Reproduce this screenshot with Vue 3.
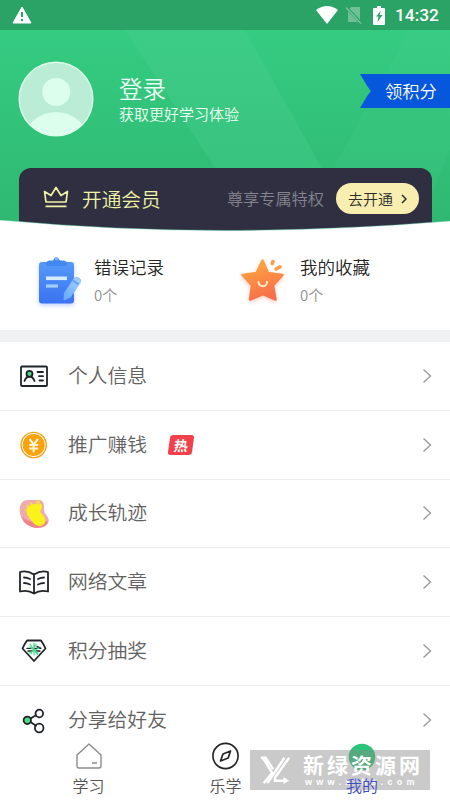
<script setup>
const rows = [
  { id: 'card', label: '个人信息' },
  { id: 'coin', label: '推广赚钱', badge: '热' },
  { id: 'foot', label: '成长轨迹' },
  { id: 'book', label: '网络文章' },
  { id: 'gem', label: '积分抽奖' },
  { id: 'share', label: '分享给好友' },
]
</script>

<template>
  <div class="screen">
    <header class="hero">
      <svg class="hero-bg" viewBox="0 0 450 231" preserveAspectRatio="none">
        <defs>
          <linearGradient id="base" x1="0" y1="0" x2="0" y2="1">
            <stop offset="0.1" stop-color="#35cc82" />
            <stop offset="1" stop-color="#2fb771" />
          </linearGradient>
          <linearGradient id="band" x1="0" y1="0" x2="0" y2="1">
            <stop offset="0" stop-color="#40ce89" />
            <stop offset="1" stop-color="#38c27c" />
          </linearGradient>
        </defs>
        <rect width="450" height="231" fill="url(#base)" />
        <path d="M106 0H228L320 165L356 231H256Z" fill="url(#band)" opacity=".8" />
        <path d="M335 165L427 0H450V150L415 231H320Z" fill="url(#band)" opacity=".4" />
      </svg>

      <div class="status">
        <svg class="warn" viewBox="0 0 20 18"><path d="M10 1L19 17H1Z" fill="#fff" stroke="#fff" stroke-linejoin="round" /><path d="M10 6v5M10 13v2" stroke="#2ca366" stroke-width="2" /></svg>
        <svg class="wifi" viewBox="0 0 22 18"><path d="M0 4Q11-4 22 4L11 18Z" fill="#fff" /></svg>
        <svg class="sim" viewBox="0 0 17 18"><path d="M6 1H15V16H3V5Z" fill="#fff" opacity=".32" /><path d="M1 1L16 17" stroke="#2ca366" stroke-width="3" /><path d="M1 1.500L16 17.500" stroke="#78c59d" stroke-width="1.300" /></svg>
        <svg class="battery" viewBox="0 0 12 19"><path d="M1 2H4V0H8V2H11Q12 2 12 3V18Q12 19 11 19H1Q0 19 0 18V3Q0 2 1 2Z" fill="#fff" /><path d="M8 4.500L3 10.500H5.500L4.500 16L9.500 9H6.500Z" fill="#2ca366" /></svg>
        <span class="clock">14:32</span>
      </div>

      <div class="profile">
        <svg class="avatar" viewBox="0 0 76 76">
          <defs><clipPath id="face"><circle cx="38" cy="38" r="36.500" /></clipPath></defs>
          <circle cx="38" cy="38" r="36.800" fill="#bbecd5" stroke="#d8fbe9" stroke-width="1.500" />
          <g clip-path="url(#face)" fill="#dcfeec"><circle cx="38.300" cy="31" r="14" /><circle cx="38" cy="84.500" r="33.500" /></g>
        </svg>
        <div class="who">
          <div class="login">登录</div>
          <div class="tip">获取更好学习体验</div>
        </div>
        <div class="ribbon">领积分</div>
      </div>

      <div class="vip">
        <svg class="crown" viewBox="0 0 26 22"><path d="M3 16L1.500 5.500L8 9.500L13 1.500L18 9.500L24.500 5.500L23 16ZM2.500 20.300H23.500" fill="none" stroke="#eff4a6" stroke-width="1.700" stroke-linejoin="round" /></svg>
        <span class="vip-title">开通会员</span>
        <span class="vip-sub">尊享专属特权</span>
        <span class="vip-btn">去开通<svg viewBox="0 0 6 10"><path d="M1 1L5 5L1 9" fill="none" stroke="#2d2c2d" stroke-width="1.500" /></svg></span>
      </div>
      <svg class="curve" viewBox="0 0 450 13" preserveAspectRatio="none"><path d="M0 0Q115 10.500 225 10.500T450 1V13H0Z" fill="#fff" /><path d="M0 0Q115 10.500 225 10.500T450 1" fill="none" stroke="#4acb9a" stroke-width=".8" opacity=".5" /></svg>
    </header>

    <section class="stats">
      <div class="stat">
        <svg class="stat-icon" viewBox="0 0 60 60">
          <defs>
            <linearGradient id="blue" x1="0" y1="0" x2="0" y2="1"><stop stop-color="#559af8" /><stop offset="1" stop-color="#3b72f2" /></linearGradient>
            <linearGradient id="pen" x1="1" y1="0" x2="0" y2="1"><stop stop-color="#a9d2fd" /><stop offset="1" stop-color="#64a9fa" /></linearGradient>
          </defs>
          <rect class="blue-shadow" x="9" y="12" width="35" height="41.500" rx="3" fill="url(#blue)" />
          <path d="M16 14Q16 10.500 20 10.500H23Q26 4 30 10.500H33Q37 10.500 37 14Q37 16 34 16H19Q16 16 16 14Z" fill="#4387f0" />
          <circle cx="26.500" cy="8.800" r="1.800" fill="#80b4fb" />
          <path d="M16 28.300H37" stroke="#d7eaff" stroke-width="3.600" /><path d="M16 36H28" stroke="#a5cdfc" stroke-width="3.200" />
          <path d="M34 50L34.500 43L43.500 29Q46 26 49 28Q52 30 50 33L40.500 47Z" fill="url(#pen)" stroke="#7db6fb" stroke-width=".8" stroke-linejoin="round" />
          <path d="M43 30.500L48.500 34.300" stroke="#4b8df2" stroke-width="1.200" />
        </svg>
        <div><div class="stat-name">错误记录</div><div class="stat-count">0个</div></div>
      </div>
      <div class="stat">
        <svg class="stat-icon" viewBox="0 0 60 60">
          <defs><linearGradient id="orange" x1="0" y1="0" x2=".35" y2="1"><stop stop-color="#ffad3f" /><stop offset="1" stop-color="#f8704a" /></linearGradient></defs>
          <path class="star-shadow" d="M26.500 10.500L32 23L46.500 25L37 35.500L39.500 49.500L27 44L14 49.500L16 35.500L6.500 25L20.500 23Z" fill="url(#orange)" stroke="url(#orange)" stroke-width="2.500" stroke-linejoin="round" />
          <path d="M22.500 32C23 37.500 30.500 37.500 31 32" fill="none" stroke="#ffecc9" stroke-width="2" stroke-linecap="round" />
          <path d="M36.200 13.500L37 11.500M40 19L44 16.800" stroke="#f6a04a" stroke-width="3.600" stroke-linecap="round" />
        </svg>
        <div><div class="stat-name">我的收藏</div><div class="stat-count">0个</div></div>
      </div>
    </section>

    <ul class="menu">
      <li v-for="row in rows" :key="row.id" class="row">
        <svg class="row-icon" viewBox="0 0 32 32" fill="none" stroke="#202429" stroke-width="1.800" stroke-linecap="round" stroke-linejoin="round">
          <template v-if="row.id === 'card'">
            <rect x="3" y="6.500" width="26" height="19.500" rx="1" />
            <path d="M6.500 21Q8 16.500 11.500 16.500T16.500 21M19.500 12H25M21 16.200H25M21.500 20.500H25" />
            <circle cx="11.500" cy="13.800" r="3" fill="#4bd885" />
          </template>
          <template v-else-if="row.id === 'coin'">
            <circle cx="15.700" cy="16" r="12.600" stroke="#f3a21e" stroke-width="1.400" />
            <circle cx="15.700" cy="16" r="11" fill="#faa10b" stroke="none" />
            <path d="M11.500 10L15.700 15.500L20 10M11.200 16H20.200M11.200 19.500H20.200M15.700 15.500V23.500" stroke="#fff8d6" stroke-width="2.100" stroke-linecap="butt" />
          </template>
          <template v-else-if="row.id === 'foot'">
            <path d="M3 7Q5 2.500 12 3H22Q26 4 26 10Q25 15 29 19Q33 25 28 28Q20 33 12 29Q3 25 2 16Q1 11 3 7Z" fill="#efaaae" stroke="none" />
            <path d="M4 20Q14 28 30 24Q29 31 20 31Q12 31 6 25Z" fill="#ee858e" stroke="none" />
            <path d="M9 11Q12 7 17 7Q22 5 24 8Q24 12 22 15Q26 18 27 22Q28 29 21 29Q16 28 13 23Q7 16 9 11Z" fill="#fbf21c" stroke="none" />
            <g fill="#f5d35c" stroke="none"><circle cx="8" cy="13" r="1.300" /><circle cx="9.500" cy="9" r="1.400" /><circle cx="13" cy="6.600" r="1.500" /><circle cx="20" cy="5.300" r="2.200" /></g>
          </template>
          <template v-else-if="row.id === 'book'">
            <path d="M16 8.500Q9 4 2 6V25.500Q10 23.500 16 27.500Q22 23.500 30 25.500V6Q23 4 16 8.500ZM16 8.500V27.500M6 11.500Q9 11.500 12 13M6 17Q9 17 12 18.500M20 13Q23 11.500 26 11.500M20 18.500Q23 17 26 17" />
          </template>
          <template v-else-if="row.id === 'gem'">
            <path d="M9 5.500H23Q25.500 9 27.500 13.500L16 26L4.500 13.500Q6.500 9 9 5.500Z" />
            <path d="M9 13.300H23L19 11.300M10 16H22" stroke-width="1.300" />
            <path d="M12 9L16 15L20 20M18 9L13 19M16 8V20M11 18L21 13M12 12L20 18" stroke="#4adc8c" stroke-width="1.200" />
          </template>
          <template v-else>
            <path d="M12.500 14.500L18 11.200M12.500 18L18 21.800" />
            <circle cx="9.300" cy="16.300" r="3.700" fill="#4bdb85" />
            <circle cx="21.300" cy="9.500" r="3.800" /><circle cx="21.200" cy="24" r="4.300" />
          </template>
        </svg>
        <span class="row-label">{{ row.label }}</span>
        <span v-if="row.badge" class="hot">{{ row.badge }}</span>
        <svg class="arrow" viewBox="0 0 10 16"><path d="M1.500 1.500L8.500 8L1.500 14.500" fill="none" stroke="#9a9a9a" stroke-width="1.400" /></svg>
      </li>
    </ul>

    <nav class="tabs">
      <div class="tab">
        <svg viewBox="0 0 30 30" fill="none" stroke="#8c8c8c" stroke-width="1.400" stroke-linejoin="round"><path d="M15 3L27 14V25Q27 27 25 27H5Q3 27 3 25V14ZM18 22H23" /></svg>
        <span>学习</span>
      </div>
      <div class="tab">
        <svg viewBox="0 0 30 30" fill="none" stroke="#242424" stroke-width="1.700" stroke-linejoin="round"><circle cx="14.500" cy="15" r="12.600" /><path d="M19.500 10L17.200 17L9.500 20L12 13Z" /></svg>
        <span>乐学</span>
      </div>
      <div class="tab">
        <svg viewBox="0 0 30 30"><circle cx="14" cy="16" r="13.300" fill="#2ac578" /></svg>
      </div>
      <div class="mark">
        <svg class="mark-logo" viewBox="0 0 34 34" fill="none" stroke="#fff"><path d="M2 4H7L15 16M4 4L14 20L5 31" stroke-width="2.600" /><path d="M27 4L9 31M32 4L17 25V28.500H29" stroke-width="2.600" /><path d="M26 24.500L32 28.500L26 32Z" fill="#fff" stroke="none" /></svg>
        <div class="mark-text"><b>新绿资源网</b><span>www.xlhs.com</span></div>
      </div>
      <span class="mine">我的</span>
    </nav>
  </div>
</template>

<style>
body { margin: 0; overflow: hidden; }
</style>

<style scoped>
.screen { width: 450px; height: 800px; display: flex; flex-direction: column; overflow: hidden; background: #fff; font-family: "Noto Sans CJK SC", sans-serif; font-weight: 350; }
svg { display: block; flex: none; }
.hero { height: 231px; position: relative; flex: none; display: flex; flex-direction: column; }
.hero-bg { position: absolute; inset: 0; width: 450px; height: 231px; }
.status { height: 30px; position: relative; display: flex; align-items: center; background: #2ca366; }
.warn { width: 20px; height: 18px; margin-left: 12px; }
.wifi { width: 22px; height: 18px; margin-left: auto; }
.sim { width: 17px; height: 18px; margin-left: 7px; }
.battery { width: 12px; height: 19px; margin-left: 11px; }
.clock { width: 55px; margin-left: 10px; font: 500 17.300px/30px Roboto, sans-serif; color: #fff; }
.profile { height: 138px; position: relative; display: flex; align-items: flex-start; box-sizing: border-box; padding: 31px 0 0 18px; color: #edfff5; }
.avatar { width: 76px; height: 76px; }
.who { margin-left: 25px; padding-top: 12px; }
.login { font-size: 23.500px; line-height: 31px; }
.tip { font-size: 15px; line-height: 20px; }
.ribbon { width: 90px; height: 34px; margin: 13px 0 0 auto; box-sizing: border-box; padding-left: 25px; background: #0757dc; clip-path: polygon(0 0, 100% 0, 100% 100%, 0 100%, 8% 65%, 12% 50%, 8% 35%); font-size: 17.300px; line-height: 34px; color: #fff; }
.vip { position: relative; height: 63px; margin: 0 18px 0 19px; display: flex; align-items: center; border-radius: 12px 12px 0 0; background: #302f42; }
.crown { width: 26px; height: 22px; margin-left: 24px; margin-top: -5px; }
.vip-title { margin: -3px 0 0 13px; font-size: 19.700px; color: #eff4a6; }
.vip-sub { margin: -3px 0 0 auto; font-size: 16.200px; color: #85848e; }
.vip-btn { width: 83px; height: 31px; margin: -2px 13px 0 12px; display: flex; align-items: center; justify-content: center; gap: 8px; border-radius: 16px; background: #f8eeb0; font-size: 15px; color: #2d2c2d; }
.vip-btn svg { width: 6px; height: 10px; }
.curve { position: absolute; left: 0; bottom: -2px; width: 450px; height: 13px; }
.stats { height: 99px; flex: none; display: grid; grid-template-columns: 206px 1fr; padding-left: 30px; }
.stat { display: flex; padding-top: 19px; }
.stat-icon { width: 60px; height: 60px; }
.blue-shadow { filter: drop-shadow(0 2px 2px #5b8ff266); }
.star-shadow { filter: drop-shadow(0 2px 2px #fa754455); }
.stat-name { margin-left: 4px; font-size: 17.500px; line-height: 34px; color: #252525; }
.stat-count { margin-left: 4px; font-size: 15px; line-height: 22px; color: #909090; }
.menu { flex: 1; min-height: 0; overflow: hidden; margin: 0; padding: 0; list-style: none; border-top: 12px solid #f0f1f3; }
.row { height: 68.800px; box-sizing: border-box; display: flex; align-items: center; padding: 0 18px; border-bottom: 1px solid #ededed; }
.row:last-child { border-bottom: 0; }
.row-icon { width: 32px; height: 32px; }
.row-label { margin: -2px 0 0 18px; font-size: 19.800px; line-height: 30px; color: #626262; }
.hot { width: 24px; height: 20px; margin-left: 22px; border-radius: 3px; transform: skewX(-8deg); background: #f2414b; color: #fff; font-weight: 700; font-size: 14px; line-height: 20px; text-align: center; }
.arrow { width: 10px; height: 16px; margin-left: auto; }
.tabs { position: relative; height: 62px; flex: none; display: grid; grid-template-columns: 137px 137px 137px; justify-content: start; padding-left: 20px; background: #fff; }
.tab { display: flex; flex-direction: column; align-items: center; padding-top: 3px; }
.tab svg { width: 30px; height: 30px; }
.tab span { font-size: 16px; line-height: 24px; margin-top: 2px; color: #555; }
.mark { position: absolute; left: 250px; top: 12px; width: 180px; height: 40px; display: flex; align-items: center; background: rgba(139, 139, 139, .46); color: #fff; }
.mark-logo { width: 32px; height: 34px; margin-left: 9px; }
.mark-text { margin-left: 12px; display: flex; flex-direction: column; }
.mark-text b { font-size: 21px; line-height: 24px; letter-spacing: 3px; font-weight: 700; white-space: nowrap; }
.mark-text span { font: 700 9px/12px "Liberation Sans", sans-serif; letter-spacing: 4.300px; padding-left: 2px; white-space: nowrap; }
.mine { position: absolute; left: 346px; top: 35px; font-size: 16px; line-height: 24px; color: #3f4cc8; }
</style>
